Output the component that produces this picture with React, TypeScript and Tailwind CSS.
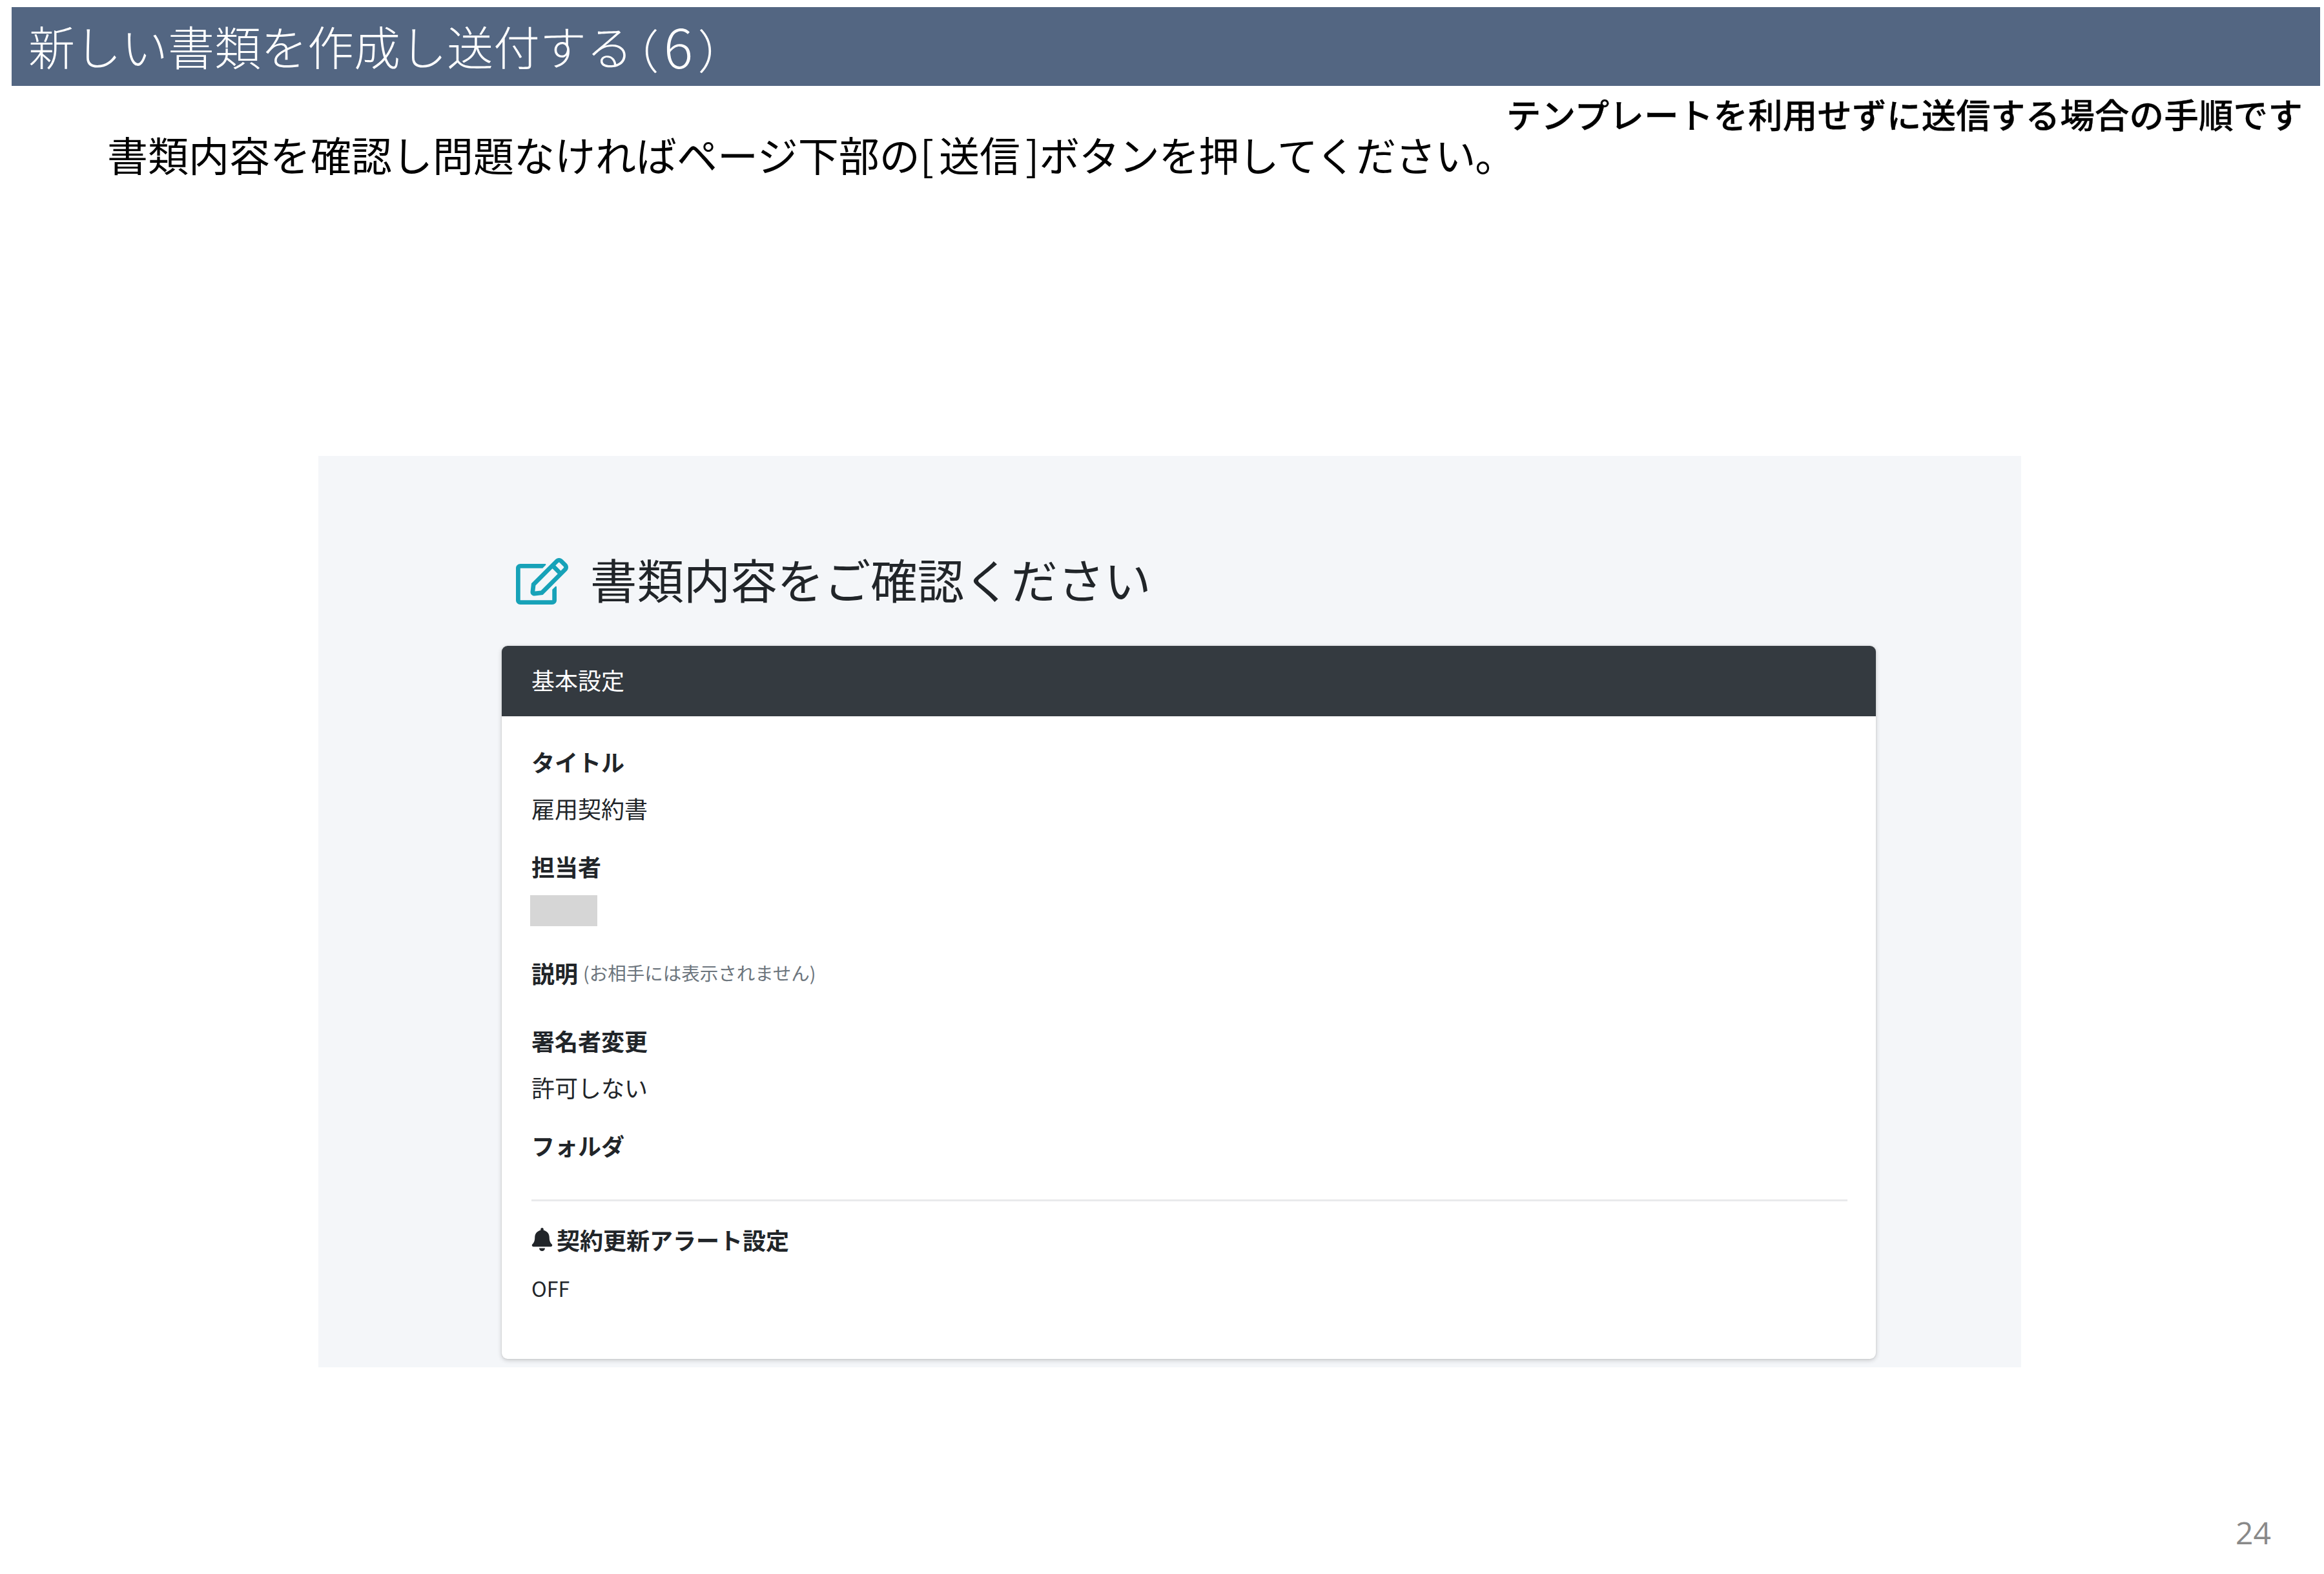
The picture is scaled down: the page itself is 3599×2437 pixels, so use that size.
import { FaBell, FaRegEdit } from 'react-icons/fa';

const JP = "font-['Noto_Sans_CJK_JP','Liberation_Sans',sans-serif]";

function Field({ label, value }: { label: string; value?: string }) {
  return (
    <div className="flex flex-col">
      <div className="text-[36px] leading-[54px] font-bold text-[#212529]">{label}</div>
      {value && <div className="mt-[18px] text-[36px] leading-[54px] text-[#212529]">{value}</div>}
    </div>
  );
}

export default function App() {
  return (
    <div className={`${JP} w-[3599px] h-[2437px] bg-white flex flex-col overflow-hidden`}>
      {/* タイトル帯 */}
      <div className="mt-[11px] ml-[18px] mr-[6px] h-[122px] bg-[#536682] flex items-center pl-[26px] pb-[4px] text-[72px] text-white font-light whitespace-nowrap">
        新しい書類を作成し送付する
        <span className="ml-[2px] [font-feature-settings:'palt'] tracking-[10px]">
          （<span className="text-[84px]">6</span>）
        </span>
      </div>

      {/* 注記 */}
      <div className="mt-[12px] pr-[33px] flex justify-end text-[53.7px] leading-[62px] font-medium [-webkit-text-stroke:0.3px_black] text-black whitespace-nowrap">
        テンプレートを利用せずに送信する場合の手順です
      </div>

      {/* 説明文 */}
      <div className="-mt-[2px] pl-[166px] text-[63px] leading-[66px] text-black whitespace-nowrap">
        書類内容を確認し問題なければページ下部の[<span className="mx-[8px]">送信</span>]
        <span className="tracking-[-1.3px]">ボタンを押してください。</span>
      </div>

      {/* 画面キャプチャ */}
      <div className="mt-[435px] ml-[493px] w-[2637px] h-[1411px] bg-[#f4f6f9] pt-[158px] pl-[284px] pr-[225px]">
        <div className="flex items-center h-[72px] pl-[22px] gap-[34px]">
          <FaRegEdit className="w-[81px] h-[72px] text-[#17a2b8]" />
          <span className="mb-[8px] text-[72.4px] leading-[72px] text-[#212529] whitespace-nowrap">書類内容をご確認ください</span>
        </div>

        <div className="mt-[64px] h-[1104px] rounded-[9px] bg-white shadow-[0_0_2px_rgba(0,0,0,0.125),0_2px_7px_rgba(0,0,0,0.2)] overflow-hidden">
          <div className="h-[109px] bg-[#343a40] flex items-center pl-[46px] pb-[6px] text-[36px] text-white">基本設定</div>

          <div className="pl-[46px] pr-[44px] pt-[43px] flex flex-col">
            <Field label="タイトル" value="雇用契約書" />
            <div className="mt-[36px]">
              <Field label="担当者" />
              <div className="mt-[18px] -ml-[2px] w-[104px] h-[48px] bg-[#d6d6d6]" />
            </div>
            <div className="mt-[45px] flex items-center gap-[8px] h-[54px]">
              <span className="text-[36px] font-bold text-[#212529]">説明</span>
              <span className="text-[28.5px] text-[#6c757d] whitespace-nowrap">(お相手には表示されません)</span>
            </div>
            <div className="mt-[51px]">
              <Field label="署名者変更" value="許可しない" />
            </div>
            <div className="mt-[36px]">
              <Field label="フォルダ" />
            </div>
            <div className="mt-[57px] h-[3px] bg-[#e9eaec]" />
            <div className="mt-[32px] flex items-center gap-[6px] h-[54px]">
              <FaBell className="w-[33px] h-[36px] text-[#212529]" />
              <span className="text-[36px] font-bold text-[#212529]">契約更新アラート設定</span>
            </div>
            <div className="mt-[21px] text-[32px] leading-[54px] text-[#212529]">OFF</div>
          </div>
        </div>
      </div>

      {/* ページ番号 */}
      <div className="mt-[223px] pr-[82px] flex justify-end text-[48px] leading-[66px] text-[#898989] font-['Open_Sans',sans-serif]">24</div>
    </div>
  );
}
